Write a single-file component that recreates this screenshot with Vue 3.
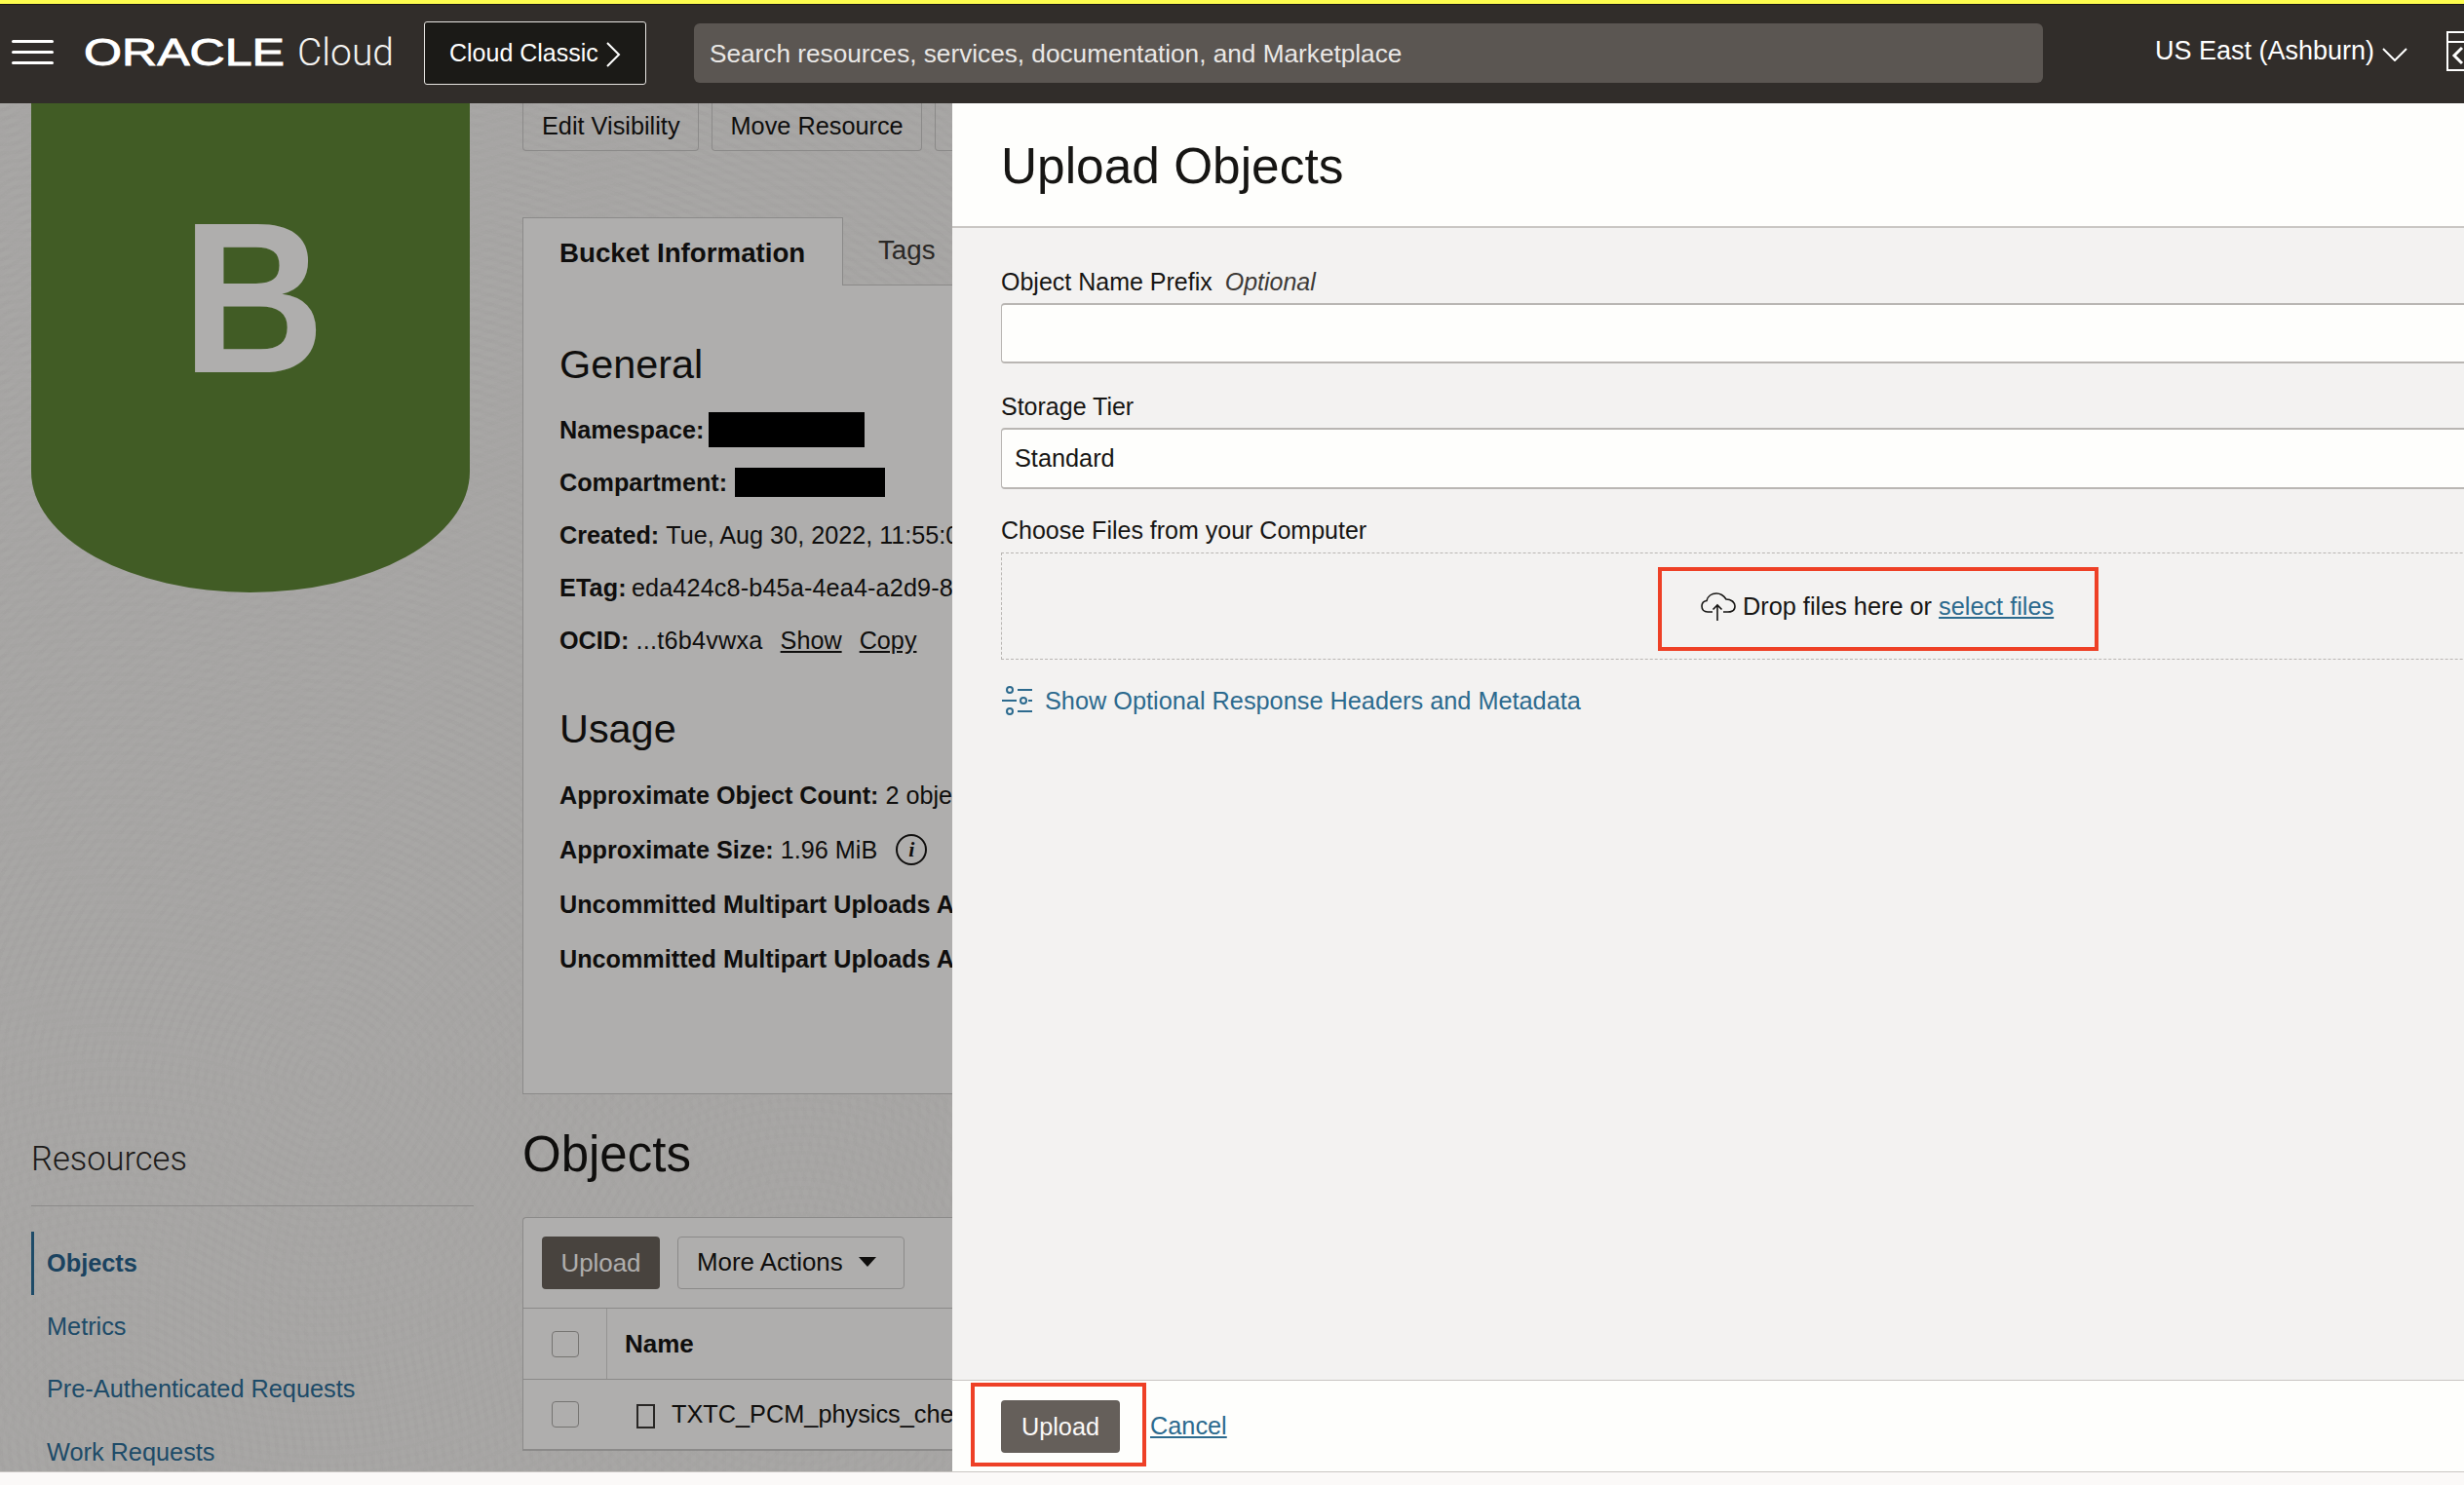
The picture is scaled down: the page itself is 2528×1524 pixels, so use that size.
<script setup>
const generalRows = [
  { label: 'Created:', value: 'Tue, Aug 30, 2022, 11:55:09 UTC' },
  { label: 'ETag:', value: 'eda424c8-b45a-4ea4-a2d9-8f1c3e07d2ab' }
]
const navLinks = ['Metrics', 'Pre-Authenticated Requests', 'Work Requests']
</script>

<template>
  <div class="page">
    <div class="warning-strip"></div>
    <header class="topbar">
      <button class="hamburger" aria-label="Menu"><i></i><i></i><i></i></button>
      <svg class="logo" viewBox="0 0 206 36" width="206" height="36">
        <text x="0" y="31" textLength="206" lengthAdjust="spacingAndGlyphs" class="logo-text">ORACLE</text>
      </svg>
      <span class="logo-cloud">Cloud</span>
      <div class="classic">
        Cloud Classic
        <svg width="16" height="26" viewBox="0 0 16 26"><path d="M2 1 L14 13 L2 25" fill="none" stroke="#fff" stroke-width="2" /></svg>
      </div>
      <div class="search">Search resources, services, documentation, and Marketplace</div>
      <div class="region">
        US East (Ashburn)
        <svg width="26" height="14" viewBox="0 0 26 14"><path d="M1 1 L13 13 L25 1" fill="none" stroke="#fff" stroke-width="2" /></svg>
      </div>
      <svg class="dev-icon" width="40" height="42" viewBox="0 0 40 42">
        <rect x="1" y="1" width="36" height="39" fill="none" stroke="#fff" stroke-width="2" />
        <path d="M1 11 H37" stroke="#fff" stroke-width="2" />
        <path d="M16 17 L8 25 L16 33" fill="none" stroke="#fff" stroke-width="3" />
      </svg>
    </header>

    <div class="content">
      <aside class="sidebar">
        <div class="bucket-badge"><span>B</span></div>
        <h3 class="res-title">Resources</h3>
        <nav class="res-nav">
          <a class="res-link active">Objects</a>
          <a v-for="link in navLinks" :key="link" class="res-link">{{ link }}</a>
        </nav>
      </aside>

      <main class="main">
        <div class="actions">
          <button class="ghost">Edit Visibility</button>
          <button class="ghost">Move Resource</button>
          <button class="ghost">Re-encrypt</button>
        </div>

        <div class="tabs">
          <div class="tab active">Bucket Information</div>
          <div class="tab">Tags</div>
        </div>
        <section class="info">
          <h2 class="info-title">General</h2>
          <div class="rows">
            <div class="row"><b>Namespace:</b><span class="redact ns"></span></div>
            <div class="row"><b>Compartment:</b><span class="redact cp"></span></div>
            <div v-for="r in generalRows" :key="r.label" class="row" :class="{ tight: r.label === 'ETag:' }"><b>{{ r.label }}</b> {{ r.value }}</div>
            <div class="row"><b>OCID:</b> <span class="ocid">...t6b4vwxa</span><a class="mono-link">Show</a><a class="mono-link">Copy</a></div>
          </div>
          <h2 class="info-title usage">Usage</h2>
          <div class="rows tall">
            <div class="row"><b>Approximate Object Count:</b> 2 objects</div>
            <div class="row"><b>Approximate Size:</b> 1.96 MiB <span class="info-dot">i</span></div>
            <div class="row"><b>Uncommitted Multipart Uploads Approximate Count:</b> 0 uploads</div>
            <div class="row"><b>Uncommitted Multipart Uploads Approximate Size:</b> 0 bytes</div>
          </div>
        </section>

        <h1 class="objects-title">Objects</h1>
        <section class="table">
          <div class="toolbar">
            <button class="solid">Upload</button>
            <button class="ghost more">
              More Actions
              <svg width="18" height="10" viewBox="0 0 18 10"><polygon points="0,0 18,0 9,10" fill="#161513" /></svg>
            </button>
          </div>
          <div class="tr head">
            <div class="cell-check sep"><span class="check"></span></div>
            <div class="name-cell">Name</div>
          </div>
          <div class="tr last">
            <div class="cell-check"><span class="check"></span></div>
            <div class="file-cell"><span class="doc"></span>TXTC_PCM_physics_chem.pdf</div>
          </div>
        </section>
      </main>

      <div class="scrim"></div>

      <div class="drawer">
        <div class="drawer-head">Upload Objects</div>
        <div class="drawer-body">
          <div class="form">
            <label class="lbl">Object Name Prefix <em>Optional</em></label>
            <div class="input"></div>
            <label class="lbl second">Storage Tier</label>
            <div class="input tier">Standard</div>
            <label class="lbl third">Choose Files from your Computer</label>
            <div class="drop">
              <div class="callout">
                <svg width="36" height="29" viewBox="0 0 36 29">
                  <path d="M12 20 H7 C3 20 1 17 1 14 C1 11 3 9 6 8.5 C7 4 11 1 16 1 C21 1 24 4 26 7 C31 7 35 10 35 14 C35 18 32 20 28 20 H23" fill="none" stroke="#161513" stroke-width="1.6" />
                  <path d="M17 29 V13 M12.5 17.5 L17 13 L21.5 17.5" fill="none" stroke="#161513" stroke-width="1.6" />
                </svg>
                <span>Drop files here or <a class="link">select files</a></span>
              </div>
            </div>
            <div class="optional">
              <svg width="32" height="32" viewBox="0 0 32 32" fill="none" stroke="#2c6a8e" stroke-width="2">
                <circle cx="9" cy="5" r="3" /><path d="M17 5 H32" />
                <path d="M1 16 H16" /><circle cx="23" cy="16" r="3" /><path d="M28 16 H32" />
                <circle cx="9" cy="27" r="3" /><path d="M17 27 H32" />
              </svg>
              <span>Show Optional Response Headers and Metadata</span>
            </div>
          </div>
        </div>
        <div class="drawer-foot">
          <div class="callout-btn"><button class="submit">Upload</button></div>
          <a class="link cancel">Cancel</a>
        </div>
      </div>
    </div>
    <div class="page-end"></div>
  </div>
</template>

<style>
html, body { margin: 0; background: #fbf9f8; }
</style>

<style scoped>
.page {
  width: 2528px;
  height: 1524px;
  overflow: hidden;
  display: flex;
  flex-direction: column;
  font-family: "Liberation Sans", Arial, sans-serif;
  font-size: 25.3px;
  color: #161513;
}
.warning-strip {
  height: 4px;
  background: #fdfd4e;
  flex: none;
}
.topbar {
  height: 102px;
  flex: none;
  box-sizing: border-box;
  border-top: 1px solid #1a1815;
  background: #312d2a;
  display: flex;
  align-items: center;
  padding-left: 12px;
  color: #fff;
  overflow: hidden;
}
.hamburger {
  width: 43px;
  flex: none;
  padding: 0;
  border: 0;
  background: none;
  display: flex;
  flex-direction: column;
  gap: 7.5px;
  margin-top: -4px;
}
.hamburger i {
  display: block;
  height: 3.5px;
  border-radius: 2px;
  background: #fff;
}
.logo {
  margin-left: 31px;
  margin-top: -4px;
  flex: none;
  overflow: visible;
}
.logo-text {
  font-size: 38px;
  font-weight: 400;
  fill: #fff;
  stroke: #fff;
  stroke-width: 0.9px;
}
.logo-cloud {
  margin-left: 13px;
  width: 130px;
  font-family: Roboto, "Liberation Sans", sans-serif;
  font-weight: 300;
  font-size: 39px;
  color: #f4f3f1;
  margin-top: -4px;
  flex: none;
}
.classic {
  width: 228px;
  height: 65px;
  flex: none;
  box-sizing: border-box;
  margin-top: -3px;
  padding-left: 25px;
  display: flex;
  align-items: center;
  gap: 7px;
  background: #1b1a17;
  border: 1px solid #e8e6e3;
  border-radius: 3px;
  font-size: 25px;
}
.classic svg { margin-top: 3px; }
.search {
  width: 1384px;
  height: 61px;
  flex: none;
  box-sizing: border-box;
  margin-left: 49px;
  margin-top: -3px;
  padding: 2px 16px 0;
  display: flex;
  align-items: center;
  background: #5b5652;
  border-radius: 6px;
  color: #e9e7e5;
  font-size: 26.2px;
}
.region {
  margin-left: 115px;
  margin-top: -6px;
  display: flex;
  align-items: center;
  gap: 8px;
  font-size: 27px;
  flex: none;
  white-space: nowrap;
}
.region svg { margin-top: 6px; }
.dev-icon {
  margin-left: 40px;
  margin-top: -6px;
  flex: none;
}

.content {
  position: relative;
  height: 1404px;
  flex: none;
  overflow: hidden;
  display: flex;
  padding-left: 32px;
  box-sizing: border-box;
  background-color: #f1efed;
  background-image:
    repeating-radial-gradient(circle at 330px 1000px, rgba(0,0,0,.008) 0 4px, transparent 4px 9px),
    repeating-radial-gradient(circle at 820px 1250px, rgba(0,0,0,.008) 0 4px, transparent 4px 9px),
    repeating-radial-gradient(circle at 120px 1380px, rgba(0,0,0,.008) 0 4px, transparent 4px 9px);
}
.scrim {
  position: absolute;
  inset: 0;
  background: rgba(0, 0, 0, 0.3);
  z-index: 1;
}

.sidebar {
  width: 454px;
  flex: none;
}
.bucket-badge {
  width: 450px;
  height: 502px;
  box-sizing: border-box;
  padding-top: 80px;
  text-align: center;
  background: #5e8536;
  border-radius: 0 0 225px 225px / 0 0 124px 124px;
  color: #fbf9f8;
  font-size: 221px;
  font-weight: 700;
  line-height: 240px;
}
.bucket-badge span {
  display: inline-block;
  transform: scaleX(0.92);
  margin-left: 6px;
}
.res-title {
  margin: 556px 0 0;
  font-family: Roboto, "Liberation Sans", sans-serif;
  font-size: 34.5px;
  font-weight: 300;
  line-height: 50px;
  padding-bottom: 23px;
  color: #2b2927;
  border-bottom: 1px solid #c8c6c4;
}
.res-nav {
  margin-top: 26px;
  display: flex;
  flex-direction: column;
}
.res-link {
  height: 64.5px;
  line-height: 64px;
  padding-left: 16px;
  color: #2c6c96;
  white-space: nowrap;
}
.res-link.active {
  font-weight: 700;
  border-left: 3px solid #2c6c96;
  padding-left: 13px;
  color: #27618a;
}

.main {
  margin-left: 50px;
  width: 1200px;
  flex: none;
}
.actions {
  display: flex;
  gap: 13px;
  height: 49px;
}
button {
  font: inherit;
  color: inherit;
}
.ghost {
  background: none;
  border: 1px solid #c8c6c4;
  border-top: 0;
  border-radius: 0 0 4px 4px;
  padding: 0 18px 2px 19px;
  white-space: nowrap;
}
.tabs {
  margin-top: 68px;
  display: flex;
  height: 70px;
}
.tab {
  box-sizing: border-box;
  padding: 9px 36px 0;
  font-size: 27.7px;
  line-height: 50px;
  color: #3d3a37;
  flex: 1;
  border-bottom: 1px solid #c8c6c4;
}
.tab.active {
  flex: none;
  width: 329px;
  padding: 11px 0 0 37px;
  font-weight: 700;
  color: #161513;
  background: #fbf9f8;
  border: 1px solid #c8c6c4;
  border-bottom: 0;
}
.info {
  height: 830px;
  box-sizing: border-box;
  padding: 56px 0 0 37px;
  background: #fbf9f8;
  border-left: 1px solid #c8c6c4;
  border-bottom: 1px solid #c8c6c4;
  white-space: nowrap;
}
.info-title {
  margin: 0 0 15px;
  font-size: 41.4px;
  font-weight: 400;
  line-height: 50px;
}
.info-title.usage {
  margin: 39px 0 15px;
}
.rows { font-size: 25.2px; }
.row {
  height: 54px;
  line-height: 54px;
  display: flex;
  gap: 0.28em;
  align-items: center;
}
.row.tight {
  gap: 0.2em;
  letter-spacing: 0.15px;
}
.tall .row {
  height: 56px;
  line-height: 56px;
}
.redact {
  display: block;
  background: #000;
}
.redact.ns {
  width: 160px;
  height: 36px;
  margin-left: -2px;
}
.redact.cp {
  width: 154px;
  height: 30px;
  margin-left: 1px;
}
.ocid { letter-spacing: 0.25px; }
.mono-link {
  text-decoration: underline;
  margin-left: 11px;
}
.info-dot {
  width: 32px;
  height: 32px;
  margin-left: 12px;
  box-sizing: border-box;
  border: 2px solid #161513;
  border-radius: 50%;
  font: italic 700 22px/28px "Liberation Serif", serif;
  text-align: center;
}
.objects-title {
  margin: 32px 0 34px;
  font-size: 51px;
  font-weight: 400;
  line-height: 60px;
}
.table {
  background: #fbf9f8;
  border-left: 1px solid #c8c6c4;
  border-top: 1px solid #c8c6c4;
  border-radius: 4px 0 0 0;
}
.toolbar {
  display: flex;
  gap: 18px;
  padding: 19px 0 19px 19px;
  border-bottom: 1px solid #c8c6c4;
  font-size: 25.9px;
}
.solid, .toolbar .ghost {
  height: 54px;
  border-radius: 4px;
}
.solid {
  width: 121px;
  background: #676059;
  border: 0;
  color: #fbf9f8;
}
.toolbar .ghost {
  width: 233px;
  border: 1px solid #c8c6c4;
  display: flex;
  align-items: center;
  gap: 16px;
}
.tr {
  height: 73px;
  box-sizing: border-box;
  display: flex;
  align-items: stretch;
  border-bottom: 1px solid #c8c6c4;
}
.tr.last { border-bottom-width: 2px; }
.cell-check {
  width: 85px;
  flex: none;
  display: flex;
  align-items: center;
  justify-content: center;
}
.cell-check.sep { border-right: 1px solid #d6d4d2; }
.check {
  width: 28px;
  height: 27px;
  box-sizing: border-box;
  border: 1px solid #a8a6a3;
  border-radius: 4px;
}
.name-cell {
  padding-left: 18px;
  font-weight: 700;
  font-size: 26px;
  line-height: 73px;
}
.file-cell {
  padding-left: 31px;
  display: flex;
  align-items: center;
  gap: 17px;
  white-space: nowrap;
}
.doc {
  width: 19px;
  height: 25px;
  box-sizing: border-box;
  border: 2px solid #3b3835;
  margin-top: 3px;
}

.drawer {
  position: absolute;
  top: 0;
  bottom: 0;
  left: 977px;
  right: 0;
  z-index: 2;
  overflow: hidden;
  display: flex;
  flex-direction: column;
  background: #f3f2f1;
}
.drawer-head {
  height: 128px;
  flex: none;
  box-sizing: border-box;
  padding-left: 50px;
  background: #fefefc;
  border-bottom: 2px solid #c9c6c3;
  font-size: 51.4px;
  line-height: 128px;
}
.drawer-body {
  flex: 1;
  padding: 40px 0 0 50px;
}
.form { width: 1800px; }
.lbl {
  display: block;
  line-height: 30px;
  font-size: 25px;
}
.lbl em {
  margin-left: 6px;
  color: #3d3a37;
}
.second { margin-top: 29px; }
.third { margin-top: 27px; }
.input {
  height: 62px;
  margin-top: 7px;
  box-sizing: border-box;
  background: #fefefc;
  border: 1px solid #b9b6b3;
  border-width: 2px 1px;
  border-radius: 4px;
}
.tier {
  height: 63px;
  padding-left: 13px;
  line-height: 58px;
}
.drop {
  height: 110px;
  margin-top: 8px;
  box-sizing: border-box;
  padding-top: 14px;
  border: 1px dashed #b9b6b3;
  display: flex;
  justify-content: center;
  align-items: flex-start;
}
.callout {
  width: 452px;
  height: 86px;
  box-sizing: border-box;
  border: 4px solid #ee4026;
  padding: 0 0 6px 40px;
  display: flex;
  align-items: center;
  gap: 7px;
  white-space: nowrap;
}
.callout svg { flex: none; }
.link {
  color: #2c6a8e;
  text-decoration: underline;
}
.optional {
  margin-top: 26px;
  display: flex;
  align-items: center;
  gap: 13px;
  color: #2c6a8e;
  line-height: 30px;
}
.drawer-foot {
  height: 94px;
  flex: none;
  box-sizing: border-box;
  padding: 2px 0 0 19px;
  background: #fefefc;
  border-top: 1px solid #c9c6c3;
  display: flex;
  align-items: flex-start;
}
.callout-btn {
  width: 180px;
  height: 86px;
  box-sizing: border-box;
  border: 4px solid #ee4026;
  padding: 14px 0 0 27px;
}
.submit {
  display: block;
  width: 122px;
  height: 54px;
  background: #655f5a;
  border: 0;
  border-radius: 4px;
  color: #fbf9f8;
}
.cancel {
  margin-left: 4px;
  margin-top: 30px;
}
.page-end {
  flex: 1;
  border-top: 1px solid #c9c6c3;
  background: #fbf9f8;
}
</style>
